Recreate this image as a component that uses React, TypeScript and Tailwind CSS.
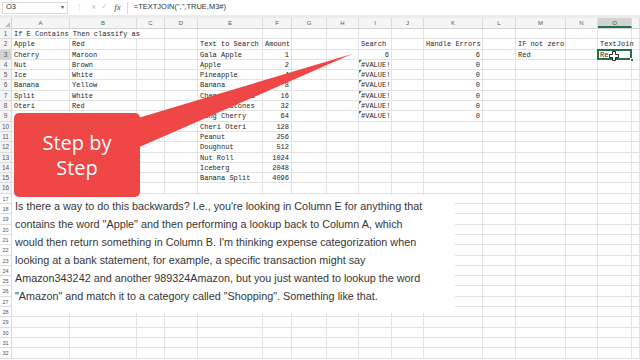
const COLS = [
  { k: "A", w: "w-[58px]" },
  { k: "B", w: "w-[67px]" },
  { k: "C", w: "w-[28px]" },
  { k: "D", w: "w-[33px]" },
  { k: "E", w: "w-[65px]" },
  { k: "F", w: "w-[29px]" },
  { k: "G", w: "w-[35px]" },
  { k: "H", w: "w-[32px]" },
  { k: "I", w: "w-[33px]" },
  { k: "J", w: "w-[32px]" },
  { k: "K", w: "w-[59px]" },
  { k: "L", w: "w-[33px]" },
  { k: "M", w: "w-[50px]" },
  { k: "N", w: "w-[32px]" },
  { k: "O", w: "w-[34px]" },
  { k: "P", w: "w-[8px]" },
];

const LEFT = ["Apple", "Cherry", "Nut", "Ice", "Banana", "Split", "Oteri"];
const RIGHT = ["Red", "Maroon", "Brown", "White", "Yellow", "White", "Red"];
const SEARCH = [
  "Gala Apple",
  "Apple",
  "Pineapple",
  "Banana",
  "Cherry Garcia",
  "Cherry Stones",
  "Bing Cherry",
  "Cheri Oteri",
  "Peanut",
  "Doughnut",
  "Nut Roll",
  "Iceberg",
  "Banana Split",
];

// cell contents by row number, then column letter
const cells: Record<number, Record<string, string>> = {
  1: { A: "If E Contains Then classify as" },
  2: { E: "Text to Search", F: "Amount", I: "Search", K: "Handle Errors", M: "IF not zero", O: "TextJoin" },
};
LEFT.forEach((t, i) => {
  const r = i + 2;
  cells[r] = { ...(cells[r] || {}), A: t, B: RIGHT[i] };
});
SEARCH.forEach((t, i) => {
  const r = i + 3;
  cells[r] = { ...(cells[r] || {}), E: t, F: String(2 ** i) };
});
cells[3] = { ...cells[3], I: "6", K: "6", M: "Red", O: "Re" };
for (let r = 4; r <= 9; r++) {
  cells[r] = { ...cells[r], I: "#VALUE!", K: "0" };
}

const LINES = [
  "Is there a way to do this backwards? I.e., you're looking in Column E for anything that",
  'contains the word "Apple" and then performing a lookup back to Column A, which',
  "would then return something in Column B. I'm thinking expense categorization when",
  "looking at a bank statement, for example, a specific transaction might say",
  "Amazon343242 and another 989324Amazon, but you just wanted to lookup the word",
  '"Amazon" and match it to a category called "Shopping". Something like that.',
];

function Cell({ r, c, w }: { r: number; c: string; w: string }) {
  const v = cells[r]?.[c];
  const num = v !== undefined && /^\d+$/.test(v);
  const err = v === "#VALUE!";
  const sel = r === 3 && c === "O";
  return (
    <div
      className={`relative h-full shrink-0 border-b border-r border-[#e3e3e3] px-[2px] whitespace-nowrap ${w} ${
        num ? "text-right" : err ? "text-center" : "text-left"
      }`}
    >
      {err && (
        <span className="absolute left-0 top-0 h-0 w-0 border-r-[3px] border-t-[3px] border-r-transparent border-t-[#2f8a4e]" />
      )}
      {v !== undefined && (
        <span className={r === 1 ? "relative z-10 bg-white pr-[2px]" : ""}>{v}</span>
      )}
      {sel && (
        <>
          <span className="absolute -left-px -top-px z-20 h-[calc(100%+2px)] w-[calc(100%+2px)] border-2 border-[#217346]" />
          <span className="absolute -bottom-[3px] -right-[3px] z-30 h-[4px] w-[4px] border border-white bg-[#217346]" />
          <svg className="absolute left-[11px] top-[1px] z-30" width="10" height="10" viewBox="0 0 10 10">
            <path
              d="M3.5 0.5h3v3h3v3h-3v3h-3v-3h-3v-3h3z"
              fill="#fff"
              stroke="#111"
              strokeWidth="0.9"
            />
          </svg>
        </>
      )}
    </div>
  );
}

export default function App() {
  const rows = Array.from({ length: 32 }, (_, i) => i + 1);
  return (
    <div className="relative h-[360px] w-[640px] overflow-hidden bg-white font-['Liberation_Mono',monospace] text-[7px] leading-[10.3px] text-[#1e1e1e]">
      {/* Formula bar */}
      <div className="flex h-[15px] items-center bg-white font-['Liberation_Sans',sans-serif] text-[7.5px] text-[#333]">
        <div className="ml-[2px] flex h-[12px] w-[66px] items-center justify-between border border-[#dadada] px-[3px]">
          <span>O3</span>
          <span className="text-[6px] text-[#555]">▾</span>
        </div>
        <span className="ml-[8px] text-[7px] text-[#bbb]">⋮</span>
        <span className="ml-[8px] text-[9px] text-[#c4c4c4]">×</span>
        <span className="ml-[5px] text-[8px] text-[#c4c4c4]">✓</span>
        <span className="ml-[6px] font-['Liberation_Serif',serif] text-[9px] italic text-[#444]">fx</span>
        <div className="ml-[6px] flex h-[12px] flex-1 items-center border-l border-[#dadada] pl-[6px]">
          =TEXTJOIN(",",TRUE,M3#)
        </div>
      </div>
      <div className="h-[3px] bg-[#ececec]" />

      {/* Column headers */}
      <div className="flex h-[11px] border-b border-[#d4d4d4] bg-[#f5f5f5] font-['Liberation_Sans',sans-serif] text-[6px] leading-[10px] text-[#555]">
        <div className="relative w-[12px] shrink-0 border-r border-[#d4d4d4]">
          <svg className="absolute bottom-[1px] right-[1px]" width="5" height="5" viewBox="0 0 5 5">
            <path d="M5 0v5H0z" fill="#bdbdbd" />
          </svg>
        </div>
        {COLS.map((c) => (
          <div
            key={c.k}
            className={`shrink-0 border-r border-[#dcdcdc] text-center ${c.w} ${
              c.k === "O" ? "border-b-2 border-b-[#217346] bg-[#d3d3d3] text-[#1d5c38]" : ""
            }`}
          >
            {c.k === "P" ? "" : c.k}
          </div>
        ))}
      </div>

      {/* Grid */}
      {rows.map((r) => (
        <div key={r} className="flex h-[10.3px]">
          <div
            className={`w-[12px] shrink-0 border-b border-r border-[#dcdcdc] text-center font-['Liberation_Sans',sans-serif] text-[#555] ${
              r > 16 ? "bg-white text-[5.5px]" : "text-[6.5px]"
            } ${r === 3 ? "bg-[#d3d3d3]" : r <= 16 ? "bg-[#f5f5f5]" : ""}`}
          >
            {r}
          </div>
          {COLS.map((c) => (
            <Cell key={c.k} r={r} c={c.k} w={c.w} />
          ))}
        </div>
      ))}

      {/* Pasted comment */}
      <div className="absolute left-[12px] top-[195px] h-[118px] w-[443px] bg-white pl-[3px] pt-[2px] font-['Liberation_Sans',sans-serif] text-[10.8px] leading-[18.1px] text-[#363636]">
        {LINES.map((l) => (
          <div key={l} className="whitespace-nowrap">
            {l}
          </div>
        ))}
      </div>

      {/* Step by Step callout */}
      <svg className="pointer-events-none absolute left-0 top-0" width="640" height="360" viewBox="0 0 640 360">
        <polygon points="352,54 128,121 128,152" fill="#ef4646" />
      </svg>
      <div className="absolute left-[14px] top-[113px] flex h-[84px] w-[126px] flex-col items-center justify-center rounded-[5px] bg-[#ef4646] font-['Open_Sans',sans-serif] text-[20px] leading-[25px] text-white">
        <span>Step by</span>
        <span>Step</span>
      </div>
    </div>
  );
}
